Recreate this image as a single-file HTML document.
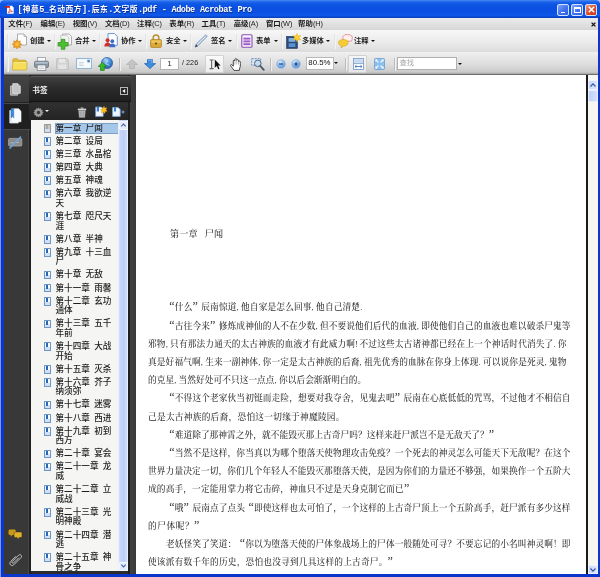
<!DOCTYPE html>
<html lang="zh"><head><meta charset="utf-8"><title>Adobe Acrobat Pro</title>
<style>
html,body{margin:0;padding:0;}
body>*{will-change:transform;}
body{width:600px;height:577px;overflow:hidden;position:relative;background:#fff;font-family:"Liberation Sans","Noto Sans CJK SC",sans-serif;color:#222;}
div,span,i{box-sizing:border-box;}
.a{position:absolute;}
/* window frame */
#frame{position:absolute;left:0;top:0;width:600px;height:577px;background:#0a36cc;border-left:1px solid #7f98ee;}
#title{position:absolute;left:0;top:0;width:600px;height:17.5px;background:linear-gradient(to bottom,#4a8cf2 0%,#2a70ec 7%,#1059e6 18%,#0a4fe0 45%,#0b52e4 70%,#0d58ea 85%,#0a48d0 94%,#0a3cba 100%);}
#title .t{position:absolute;left:17.6px;top:4px;height:12px;line-height:12px;font-size:7.75px;font-weight:bold;color:#fff;white-space:nowrap;width:234px;text-align-last:justify;font-family:"Liberation Mono","Noto Sans CJK SC",monospace;text-shadow:0.5px 0.5px 0 #0a2a8a;}
.wb{position:absolute;top:3.7px;width:12px;height:12px;border-radius:2px;border:1px solid #d4e2ff;background:linear-gradient(135deg,#7ea6fa,#3f72ec 55%,#2c5ee2);}
#menubar{position:absolute;left:3.5px;top:17.5px;width:594px;height:12.5px;border-bottom:1px solid #f4f4f4;background:linear-gradient(to bottom,#ececec,#d6d6d6);}
.mi{position:absolute;font-weight:700;top:0.3px;height:12.5px;line-height:12.5px;font-size:7.4px;width:23.8px;white-space:nowrap;color:#1a1a1a;text-align-last:justify;}
#tb1{position:absolute;left:3.5px;top:30px;width:594px;height:23px;background:linear-gradient(to bottom,#f7f7f7,#ebebeb 55%,#dcdcdc);border-bottom:1px solid #f1f1f1;}
#tb2{position:absolute;left:3.5px;top:53px;width:594px;height:22.3px;background:linear-gradient(to bottom,#eeeeee,#dedede 50%,#cbcbcb 86%,#b0b0b0 93%,#4e4e4e 100%);}
.tl{position:absolute;font-weight:700;top:36.4px;height:10px;line-height:10px;font-size:7.3px;text-align-last:justify;color:#1a1a1a;white-space:nowrap;}
.dd{position:absolute;width:0;height:0;border-left:2px solid transparent;border-right:2px solid transparent;border-top:2.4px solid #111;margin-left:-0.3px;}
.grip{position:absolute;width:1px;height:15px;top:34px;background:#e2e2e2;box-shadow:1px 0 0 #f4f4f4;}
.sep{position:absolute;width:1px;height:13px;top:57.5px;background:#bcbcbc;box-shadow:1px 0 0 #f0f0f0;}
.box{position:absolute;background:#fff;border:1px solid #8e8e8e;font-size:7.5px;line-height:10px;color:#222;}
/* left panel */
#panel{position:absolute;left:4px;top:75.3px;width:132px;height:498.7px;background:linear-gradient(to right,#2c2c2c 0,#2c2c2c 124px,#1c1e22 124px,#1c1e22 126.200px,#414141 126.200px,#3a3a3a 132px);}
#strip{position:absolute;left:0;top:0;width:24.5px;height:100%;background:#383838;border-right:1px solid #484848;box-shadow:2.5px 0 0 #212121;}
#phead{position:absolute;left:25px;top:1.2px;width:101.500px;height:26.3px;background:linear-gradient(to bottom,#404040,#2c2c2c 45%,#1f1f1f);border-top:1px solid #565656;border-bottom:1px solid #141414;border-radius:2px 2px 0 0;}
#phead .t{position:absolute;left:3.3px;top:9.2px;font-size:7.6px;line-height:10px;color:#f4f4f4;font-weight:700;}
#ptool{position:absolute;left:25px;top:28px;width:99px;height:17.200px;background:linear-gradient(to bottom,#303030,#242424);}
#list{position:absolute;left:27px;top:45.2px;width:97px;height:451px;background:#f5f5f3;overflow:hidden;}
#list .in{position:absolute;left:0;top:1.9px;width:88px;}
.bi{position:relative;font-weight:500;padding:1.75px 0 1.75px 24.5px;font-size:8.6px;line-height:9.6px;white-space:nowrap;color:#1e1e1e;word-spacing:1.9px;}
.bi span{display:inline-block;vertical-align:top;}
.bi.sel span{background:#a5c8ea;outline:1px solid #7d9fc4;width:62px;}
.bk{position:absolute;left:12.5px;top:2px;width:7.1px;height:8.7px;background:#fbfdff;border:1px solid #6a96c8;border-radius:0.5px;}
.bk:after{content:"";position:absolute;left:1.4px;top:0;width:2.2px;height:4px;background:#2a66b4;}.bk:before{content:"";position:absolute;left:0;bottom:0;width:100%;height:3px;background:#cfe0f4;}
.sel .bk{background:#c9c9c9;border-color:#9a9a9a;}
.sel .bk:after{background:#a8a8a8;}
#lsb{position:absolute;left:87px;top:0;width:10px;height:452px;background:linear-gradient(to right,#f2f6ff 0,#c6d5f9 22%,#bdcef7 60%,#ccd9fa 85%,#f2f6ff 100%);}
/* doc */
#doc{position:absolute;left:136px;top:75.3px;width:450px;height:498.7px;background:#fff;}
.ln{position:absolute;font-family:"Liberation Serif","Noto Serif CJK SC",serif;font-size:8.7px;line-height:12px;height:12px;color:#333;font-weight:500;white-space:nowrap;}
.ln.j{text-align-last:justify;}
.ln .q{display:inline-block;width:8.7px;font-size:12px;line-height:0;font-weight:normal;}.ln .qo{text-align:right;text-align-last:right;}.ln .qc{text-align:left;text-align-last:left;}
.ln .h{display:inline-block;width:0.5em;text-align:left;text-align-last:left;}
#vline{position:absolute;left:586px;top:75.3px;width:2px;height:498.7px;background:#1a1a1a;}
#vsb{position:absolute;left:588px;top:75.3px;width:9.5px;height:498.7px;background:#f6f6f2;}
.mi span{font-weight:normal;letter-spacing:-0.1px}
#title .t span{font-size:8.6px;letter-spacing:-0.5px}
</style></head><body>
<div id="frame"></div>
<div id="title">
  <svg class="a" style="left:5px;top:5px" width="9" height="9" viewBox="0 0 9 9"><path d="M2 .7h5l1.700 1.700v6.300h-6.700z" fill="#fff"/><path d="M0 1h5v1.800h-5z" fill="#cc1f1a"/><path d="M3.200 7.600c1-1.300 1.600-2.700 1.500-4 .5 1.700 1.500 2.600 2.900 2.900-1.600 0-3 .4-4.400 1.100z" fill="none" stroke="#d4261c" stroke-width="0.700"/></svg>
  <div class="t"><span>[</span>神墓<span>5_</span>名动西方<span>].</span>辰东<span>.</span>文字版<span>.pdf - Adobe Acrobat Pro</span></div>
  <div class="wb" style="left:557.3px"><i class="a" style="left:2.5px;top:7px;width:4.5px;height:1.8px;background:#fff"></i></div>
  <div class="wb" style="left:571.2px"><i class="a" style="left:2px;top:2px;width:6.5px;height:6px;border:1px solid #fff;border-top-width:2px"></i></div>
  <div class="wb" style="left:585px;background:linear-gradient(135deg,#f0a088,#d9502c 50%,#c23a18)">
    <svg class="a" style="left:1.5px;top:1.5px" width="7" height="7" viewBox="0 0 7 7"><path d="M0.8 0.8L6.2 6.2M6.2 0.8L0.8 6.2" stroke="#fff" stroke-width="1.5"/></svg></div>
</div>
<i class="a" style="left:0;top:0;width:3px;height:3px;background:radial-gradient(circle at 100% 100%,rgba(170,190,250,0) 2.200px,#aabefa 3px)"></i><i class="a" style="left:597px;top:0;width:3px;height:3px;background:radial-gradient(circle at 0 100%,rgba(170,190,250,0) 2.200px,#aabefa 3px)"></i>
<div id="menubar">
<div class="mi" style="left:4.3px">文件<span>(F)</span></div>
<div class="mi" style="left:36.5px">编辑<span>(E)</span></div>
<div class="mi" style="left:68.7px">视图<span>(V)</span></div>
<div class="mi" style="left:100.9px">文档<span>(D)</span></div>
<div class="mi" style="left:133.1px">注释<span>(C)</span></div>
<div class="mi" style="left:165.3px">表单<span>(R)</span></div>
<div class="mi" style="left:197.5px">工具<span>(T)</span></div>
<div class="mi" style="left:229.7px">高级<span>(A)</span></div>
<div class="mi" style="left:261.9px">窗口<span>(W)</span></div>
<div class="mi" style="left:294.1px">帮助<span>(H)</span></div>
<svg class="a" style="left:586.6px;top:3.6px" width="5" height="5" viewBox="0 0 5 5"><path d="M0.6 0.6L4.4 4.4M4.4 0.6L0.6 4.4" stroke="#111" stroke-width="1.3"/></svg>
</div>
<div id="tb1"></div>
<div id="tb2"></div>
<!-- toolbar 1 -->
<i class="grip" style="left:6.5px"></i>
<svg class="a" style="left:12px;top:33px" width="15" height="17" viewBox="0 0 15 17"><path d="M5.5 1h6.5l2.5 2.5v8.5h-9z" fill="#fdfdfd" stroke="#9a9a9a" stroke-width="0.8"/><path d="M12 1v2.5h2.5" fill="#ddd" stroke="#9a9a9a" stroke-width="0.6"/><path d="M5 6.6l1.2 1.9 2.2-.6-.5 2.2 1.9 1.2-1.9 1.2.5 2.2-2.2-.6L5 16l-1.2-1.9-2.2.6.5-2.2L.2 11.300l1.900-1.200-.5-2.200 2.200.6z" fill="#f0a020" stroke="#c87a10" stroke-width="0.5"/><circle cx="5" cy="11.300" r="1.800" fill="#f8c040"/></svg>
<div class="tl" style="left:29.800px;width:14.2px">创建</div><i class="dd" style="left:47.5px;top:40.300px"></i>
<i class="grip" style="left:54px"></i>
<svg class="a" style="left:56.500px;top:33px" width="15" height="17" viewBox="0 0 15 17"><path d="M5.5 1h6.5l2.5 2.500v8.500h-9z" fill="#fdfdfd" stroke="#9a9a9a" stroke-width="0.800"/><path d="M3.800 2.300h6l2 2v7.500h-8z" fill="#f4f4f4" stroke="#a8a8a8" stroke-width="0.600"/><path d="M4.300 6.300h3.600v3.200h3.200v3.600h-3.200v3.200h-3.600v-3.200h-3.200v-3.600h3.200z" fill="#4cc030" stroke="#2a8a18" stroke-width="0.700"/></svg>
<div class="tl" style="left:75px;width:14.2px">合并</div><i class="dd" style="left:92.600px;top:40.300px"></i>
<i class="grip" style="left:99px"></i>
<svg class="a" style="left:103.500px;top:33.300px" width="14" height="15" viewBox="0 0 14 15"><path d="M4 .6h6.500l2.800 2.800v9h-9.300z" fill="#fff" stroke="#5a8ad0" stroke-width="0.900"/><circle cx="3.600" cy="7.200" r="2" fill="#d03028"/><path d="M.4 13.500c0-3 1.400-4 3.200-4s3.200 1 3.200 4z" fill="#d03028"/><circle cx="8.300" cy="8.200" r="1.900" fill="#3a6ac8"/><path d="M5.300 14.200c0-2.800 1.300-3.800 3-3.800s3 1 3 3.800z" fill="#3a6ac8"/></svg>
<div class="tl" style="left:120.800px;width:14.2px">协作</div><i class="dd" style="left:138.100px;top:40.300px"></i>
<i class="grip" style="left:145px"></i>
<svg class="a" style="left:150px;top:34px" width="12" height="14" viewBox="0 0 12 14"><path d="M3.200 6v-2.200a2.800 2.800 0 0 1 5.600 0v2.200" fill="none" stroke="#b89030" stroke-width="1.500"/><rect x=".6" y="5.600" width="10.800" height="7.800" rx="1" fill="#dcaa38" stroke="#a87818" stroke-width="0.700"/><rect x="1.400" y="6.300" width="9.200" height="2.600" fill="#f0cc68" opacity=".8"/><circle cx="6" cy="9.500" r="1.100" fill="#6a4808"/></svg>
<div class="tl" style="left:165.800px;width:14.2px">安全</div><i class="dd" style="left:183.100px;top:40.300px"></i>
<i class="grip" style="left:190px"></i>
<svg class="a" style="left:194px;top:33.500px" width="14" height="14" viewBox="0 0 14 14"><path d="M1 13.200l1-3 9.300-9.200c.8-.5 2.200.8 1.700 1.700l-9.200 9.300z" fill="#a9c2dc" stroke="#7493b6" stroke-width="0.600"/><path d="M1 13.200l1-3 2 2z" fill="#3c4c62"/><path d="M3.200 10.800l8.400-8.400" stroke="#e6eef8" stroke-width="0.900"/></svg>
<div class="tl" style="left:211.300px;width:14.2px">签名</div><i class="dd" style="left:228.500px;top:40.300px"></i>
<i class="grip" style="left:236px"></i>
<svg class="a" style="left:240.500px;top:34px" width="12" height="14" viewBox="0 0 12 14"><rect x=".8" y=".8" width="10.200" height="12.400" rx="1" fill="#fbf8fd" stroke="#8a50b0" stroke-width="1.100"/><rect x="2.400" y="3.600" width="7" height="2" fill="#a060c8"/><rect x="2.400" y="6.400" width="7" height="2" fill="#a060c8"/><rect x="2.400" y="9.200" width="7" height="2" fill="#a060c8"/></svg>
<div class="tl" style="left:256px;width:14.2px">表单</div><i class="dd" style="left:273.800px;top:40.300px"></i>
<i class="grip" style="left:281px"></i>
<svg class="a" style="left:286px;top:32.500px" width="16" height="16" viewBox="0 0 16 16"><rect x=".6" y="3.500" width="10.800" height="11.800" fill="#2a4a78" stroke="#18305a" stroke-width="0.600"/><rect x="2.600" y="5" width="6.800" height="3.800" fill="#7fb0e4"/><rect x="2.600" y="10.200" width="6.800" height="3.800" fill="#5a90d0"/><path d="M11 .3l1.100 2.600 2.800-.5-1.600 2.300 1.600 2.300-2.800-.5-1.100 2.600-1.100-2.600-2.800.5 1.600-2.300-1.600-2.300 2.800.5z" fill="#f8d030" stroke="#e0a818" stroke-width="0.400"/></svg>
<div class="tl" style="left:302.300px;width:21px">多媒体</div><i class="dd" style="left:326.300px;top:40.300px"></i>
<i class="grip" style="left:333.500px"></i>
<svg class="a" style="left:338px;top:33.800px" width="15" height="14" viewBox="0 0 15 14"><path d="M6.500 1.200c.8-1 2.400-1 3.200-.2 1-.8 2.800-.5 3.300.8 1.300.2 1.800 1.800 1 2.800.6 1.200-.3 2.600-1.700 2.600h-5.300c-1.500 0-2.300-1.300-1.900-2.500-.9-1.300 0-3.200 1.400-3.500z" fill="#fdf0f0" stroke="#d86a6a" stroke-width="0.700"/><path d="M.5 8.800c0-2 1.600-3.300 4.800-3.300s4.800 1.300 4.800 3.300-1.800 3.200-4.300 3.200l-2.800 1.800.6-2.200c-1.900-.4-3.100-1.400-3.100-2.800z" fill="#f8cc30" stroke="#d8a010" stroke-width="0.600"/></svg>
<div class="tl" style="left:354px;width:14.2px">注释</div><i class="dd" style="left:371.300px;top:40.300px"></i>
<!-- toolbar 2 -->
<i class="grip" style="left:6.500px;top:57px"></i>
<svg class="a" style="left:12px;top:57.500px" width="16" height="13" viewBox="0 0 16 13"><path d="M.8 2c0-.8.500-1.300 1.300-1.300h3.200l1.400 1.500h6.300c.8 0 1.200.5 1.200 1.200v1.200h-13.400z" fill="#e8c038" stroke="#b8901c" stroke-width="0.600"/><path d="M1.300 12c-.6 0-.9-.4-.9-1l.4-6.200c0-.6.400-1 1-1h12.400c.7 0 1.100.4 1 1l-.5 6.200c0 .6-.4 1-1 1z" fill="#f8de58" stroke="#c09a20" stroke-width="0.600"/><path d="M1.500 4.600h12.800" stroke="#fdf0a0" stroke-width="0.800"/></svg>
<svg class="a" style="left:34px;top:57px" width="15" height="14" viewBox="0 0 15 14"><rect x="3.400" y=".6" width="8.200" height="4.500" fill="#fafafa" stroke="#8a929a" stroke-width="0.700"/><rect x=".5" y="4.200" width="14" height="6.300" rx="1.400" fill="#8a98a8" stroke="#5a6670" stroke-width="0.700"/><rect x="1.200" y="4.900" width="12.600" height="1.800" fill="#b4c0cc"/><rect x="3.200" y="8" width="8.600" height="5.300" fill="#fdfdfd" stroke="#6a747e" stroke-width="0.700"/><path d="M4.600 10h5.800M4.600 11.600h5.800" stroke="#b0b0b0" stroke-width="0.600"/></svg>
<svg class="a" style="left:56px;top:57.800px" width="13" height="12" viewBox="0 0 13 12"><path d="M.6 1.400c0-.5.300-.8.800-.8h9.200l1.800 1.800v8.200c0 .5-.3.800-.8.800h-10.200c-.5 0-.8-.3-.8-.8z" fill="#d4d4d4" stroke="#b4b4b4" stroke-width="0.700"/><rect x="3" y=".9" width="6.200" height="3.800" fill="#e8e8e8"/><rect x="2.400" y="6.600" width="8" height="4.500" fill="#e4e4e4"/></svg>
<svg class="a" style="left:76px;top:58px" width="16" height="11" viewBox="0 0 16 11"><rect x=".6" y=".6" width="14.800" height="9.800" fill="#f8fbfe" stroke="#86acd4" stroke-width="0.900"/><rect x="11.300" y="1.800" width="2.600" height="2.600" fill="#5a86b8"/><path d="M3 4.400h5M3 6h4M3 7.600h5" stroke="#b8c6d6" stroke-width="0.700"/></svg>
<svg class="a" style="left:97.500px;top:57px" width="15" height="14" viewBox="0 0 15 14"><defs><radialGradient id="gl" cx=".4" cy=".3" r=".8"><stop offset="0" stop-color="#9fd0f8"/><stop offset=".6" stop-color="#3a80d0"/><stop offset="1" stop-color="#1c58a8"/></radialGradient></defs><circle cx="9" cy="6" r="5.600" fill="url(#gl)" stroke="#1c4e98" stroke-width="0.600"/><path d="M6.500 2.200c1.500-.3 3 .6 3 1.800s-1.800 1.200-1.400 2.600 2.600.6 3.400 2" fill="none" stroke="#c8e4fa" stroke-width="0.900" opacity=".8"/><path d="M4.400 5.200l4.200 4.300h-2.300v3.900h-3.800v-3.900h-2.300z" fill="#38b828" stroke="#1c7c14" stroke-width="0.700"/></svg>
<i class="sep" style="left:119px"></i>
<svg class="a" style="left:126px;top:59px" width="12" height="10" viewBox="0 0 12 10"><path d="M6 .5l5.500 5h-3v4h-5v-4h-3z" fill="#c4c4c4" stroke="#aaa" stroke-width="0.600"/></svg>
<svg class="a" style="left:144px;top:59px" width="12" height="10" viewBox="0 0 12 10"><path d="M6 9.600l5.500-5h-3v-4h-5v4h-3z" fill="#3c8ce0" stroke="#1c5cb0" stroke-width="0.700"/><path d="M4 1.200h4v3.400" fill="none" stroke="#8cc4f8" stroke-width="0.700"/></svg>
<div class="box" style="left:160.300px;top:57.500px;width:19px;height:11.500px;text-align:center;border-color:#b4b4b4">1</div>
<div class="tl" style="left:181.500px;top:58.300px;font-size:7.300px;width:15.200px;text-align-last:justify;font-weight:normal;color:#1a1a1a">/ 226</div>
<div class="a" style="left:204.800px;top:54.800px;width:19px;height:17.500px;background:linear-gradient(#fafafa,#ececec);border:1px solid #d2d2d2;border-radius:1px"></div>
<svg class="a" style="left:208.500px;top:59px" width="12" height="11" viewBox="0 0 12 11"><path d="M.6 1h4M.6 9.600h4M2.600 1v8.600" stroke="#666" stroke-width="1.100" fill="none"/><path d="M5.800.6v8.200l2-1.700 1.400 3.200 1.300-.6-1.400-3.100h2.500z" fill="#111"/></svg>
<svg class="a" style="left:229.500px;top:57.500px" width="13" height="13" viewBox="0 0 13 13"><path d="M4 12.400c-.8-1.600-2.400-3-3.400-4.600-.5-.9.700-1.600 1.400-.9l1.300 1.300v-5.200c0-1 1.500-1 1.600 0v-1.600c.1-1.100 1.700-1.100 1.800 0v1c.1-1.100 1.700-1 1.800.1v1.100c.2-.9 1.700-.8 1.800.2 0 2.100.4 4.300-.5 6.100l-.5 2.500z" fill="#fff" stroke="#2a2a2a" stroke-width="0.850" stroke-linejoin="round"/><path d="M4.900 3v3.500M6.700 2.400v4M8.500 3.600v3" stroke="#777" stroke-width="0.500"/></svg>
<svg class="a" style="left:250.500px;top:57.500px" width="14" height="13" viewBox="0 0 14 13"><rect x=".7" y=".7" width="9" height="6.500" fill="#dbe8f6" stroke="#5a86b8" stroke-width="0.900" stroke-dasharray="2 1"/><circle cx="6.800" cy="5.400" r="3.300" fill="#c0d8f0" fill-opacity=".8" stroke="#5a6a7c" stroke-width="1"/><path d="M9.200 7.800l3.600 4" stroke="#4a5666" stroke-width="1.800" stroke-linecap="round"/></svg>
<i class="sep" style="left:269.500px"></i>
<svg class="a" style="left:275.500px;top:58.500px" width="10" height="10" viewBox="0 0 10 10"><defs><radialGradient id="zb" cx=".4" cy=".3" r=".8"><stop offset="0" stop-color="#d8eafc"/><stop offset=".6" stop-color="#78aae4"/><stop offset="1" stop-color="#5088cc"/></radialGradient></defs><circle cx="5" cy="5" r="4.500" fill="url(#zb)" stroke="#a8c4e6" stroke-width="0.700"/><path d="M3 5h4" stroke="#1c447e" stroke-width="1.200"/></svg>
<svg class="a" style="left:291px;top:58.500px" width="10" height="10" viewBox="0 0 10 10"><circle cx="5" cy="5" r="4.500" fill="url(#zb)" stroke="#a8c4e6" stroke-width="0.700"/><path d="M3 5h4M5 3v4" stroke="#1c447e" stroke-width="1.200"/></svg>
<div class="box" style="left:305.500px;top:57.200px;width:27.500px;height:12.500px;border-color:#b8b8b8;padding-left:1.300px;line-height:10.500px;font-size:7.800px;color:#111">80.5%</div>
<i class="dd" style="left:334.600px;top:62.300px"></i>
<i class="sep" style="left:344.500px"></i>
<div class="a" style="left:348.200px;top:54.800px;width:19.200px;height:17.500px;background:linear-gradient(#f6f6f6,#e6e6e6);border:1px solid #d0d0d0;border-radius:1px"></div>
<svg class="a" style="left:353px;top:58px" width="11" height="12" viewBox="0 0 11 12"><rect x=".5" y=".5" width="10" height="11" fill="#fafcff" stroke="#7f9fc8" stroke-width="0.900"/><rect x="1.200" y="1.200" width="8.600" height="3.400" fill="#c4d8f0"/><path d="M.6 5.400h9.800" stroke="#7f9fc8" stroke-width="0.900"/><path d="M2 8.500h7M2 8.500l1.500-1.300M2 8.500l1.500 1.300M9 8.500l-1.500-1.300M9 8.500l-1.500 1.300" stroke="#3a6aa8" stroke-width="0.800" fill="none"/></svg>
<svg class="a" style="left:374.200px;top:58px" width="11" height="12" viewBox="0 0 11 12"><rect x=".5" y=".5" width="10" height="11" rx="1" fill="#8cc0ec" stroke="#6a9ed0" stroke-width="0.800"/><path d="M1.800 1.800l2.600 2.600M9.200 1.800l-2.600 2.600M1.800 10.200l2.600-2.600M9.200 10.200l-2.600-2.600" stroke="#fff" stroke-width="1.200"/><path d="M1.500 1.500h2.200l-2.200 2.200zM9.500 1.500h-2.200l2.200 2.200zM1.500 10.500h2.200l-2.200-2.200zM9.500 10.500h-2.200l2.200-2.200z" fill="#fff"/></svg>
<i class="sep" style="left:393.500px"></i>
<div class="box" style="left:397px;top:57.200px;width:59.500px;height:12.500px;border-color:#b0b0b0;color:#a8a8a8;padding-left:1.500px;line-height:10.500px;font-size:7.300px">查找</div>
<i class="dd" style="left:458px;top:62.800px"></i>

<div id="panel">
  <div id="strip">
    <div class="a" style="left:0;top:1px;width:24.500px;height:26.500px;background:linear-gradient(#444,#383838);border-bottom:1px solid #222"></div>
    <div class="a" style="left:0;top:28px;width:25.500px;height:26.500px;background:#202020;border-top:1px solid #4a4a4a;border-bottom:1px solid #4a4a4a"></div>
    <svg class="a" style="left:5.500px;top:8px" width="11" height="13" viewBox="0 0 12 14"><path d="M.6 3.200h6.200l1.600 1.600v8.400h-7.800z" fill="#9c9c9c" stroke="#d8d8d8" stroke-width="0.800"/><path d="M3 .600h5.600l2.600 2.600v8h-8.200z" fill="#c4c4c4" stroke="#ececec" stroke-width="0.800"/><path d="M8.600 .600v2.600h2.600" fill="#8c8c8c" stroke="#ececec" stroke-width="0.600"/></svg>
    <svg class="a" style="left:4.800px;top:33px" width="13" height="16" viewBox="0 0 13 16"><path d="M.8 2.500h6.400l2 2v10.500h-8.400z" fill="#dce8f6" stroke="#f4f8fc" stroke-width="0.700"/><path d="M3.200.800h6.400l2.400 2.400v10.600h-8.800z" fill="#f6fafe" stroke="#fff" stroke-width="0.600"/><path d="M2 .500h2.800v9.500l-1.400-1.500-1.400 1.500z" fill="#3c8ad8" stroke="#2a68b0" stroke-width="0.400"/></svg>
    <svg class="a" style="left:3.500px;top:60.500px" width="15" height="13" viewBox="0 0 15 13"><rect x=".6" y="2.400" width="13.200" height="7.600" rx="1" fill="#8a8a8a" stroke="#b4b4b4" stroke-width="0.700"/><path d="M2.500 7.500c1.500-2.500 2.500 1 4 -1s2 1.500 4.500-.5" fill="none" stroke="#d0d0d0" stroke-width="0.700"/><path d="M1.500 12.400l11.500-11.800" stroke="#6aa4e0" stroke-width="1.500"/></svg>
    <svg class="a" style="left:4px;top:454px" width="15" height="11" viewBox="0 0 15 11"><path d="M.5 2.200c0-1 .6-1.700 1.700-1.700h4c1.100 0 1.700.7 1.700 1.700v2.200c0 1-.6 1.700-1.700 1.700h-1.700l-1.800 1.700v-1.700c-1.400 0-2.200-.7-2.200-1.700z" fill="#c89818"/><path d="M6 4.600c0-1 .6-1.700 1.700-1.700h4.600c1.100 0 1.700.7 1.700 1.700v2.300c0 1-.6 1.700-1.700 1.700h-1.400v1.900l-2-1.900h-1.200c-1.100 0-1.700-.7-1.700-1.700z" fill="#e0b028" stroke="#2e2e2e" stroke-width="0.500"/></svg>
    <svg class="a" style="left:4.500px;top:478px" width="14" height="14" viewBox="0 0 14 14"><path d="M9.800 4.800l-5.200 5.200c-.9.900-2.300-.4-1.400-1.400l6.400-6.400c1.600-1.600 4 .7 2.400 2.400l-7.200 7.200c-2.300 2.300-5.400-1-3.200-3.200l5.400-5.400" fill="none" stroke="#c4c4c4" stroke-width="1"/></svg>
  </div>
  <div id="phead"><div class="t">书签</div>
    <div class="a" style="left:91.300px;top:10.300px;width:7.800px;height:7.800px;border:1px solid #b8b8b8;background:#262626"><svg class="a" style="left:0.900px;top:0.900px" width="4" height="4" viewBox="0 0 4 4"><path d="M3.200 0v4l-3-2z" fill="#fafafa"/></svg></div>
  </div>
  <div id="ptool">
    <svg class="a" style="left:4px;top:3.500px" width="11" height="11" viewBox="0 0 11 11"><path d="M5.500 .4l.9 1.300 1.500-.5.300 1.600 1.600.3-.5 1.500 1.300.9-1.300.9.500 1.500-1.600.3-.3 1.600-1.500-.5-.9 1.300-.9-1.300-1.500.5-.3-1.600-1.600-.3.500-1.500-1.300-.9 1.300-.9-.5-1.500 1.600-.3.300-1.600 1.500.5z" fill="#9a9a9a"/><circle cx="5.500" cy="5.500" r="1.700" fill="#3a3a3a"/></svg>
    <i class="dd" style="left:15.800px;top:7.300px;border-top-color:#f0f0f0"></i>
    <svg class="a" style="left:48px;top:3.500px" width="10" height="11" viewBox="0 0 10 11"><path d="M1.600 3.400h6.800l-.6 7.200h-5.600z" fill="#b8b8b8" stroke="#8a8a8a" stroke-width="0.500"/><rect x=".8" y="1.600" width="8.400" height="1.600" fill="#d0d0d0"/><rect x="3.600" y=".500" width="2.800" height="1.200" fill="#c0c0c0"/><path d="M3.500 4.500v5M5 4.500v5M6.500 4.500v5" stroke="#8e8e8e" stroke-width="0.500"/></svg>
    <svg class="a" style="left:65.500px;top:3.200px" width="13" height="11" viewBox="0 0 13 11"><path d="M.6 1h5.800l1.800 1.800v7.600h-7.600z" fill="#f2f6fc" stroke="#6a9ad4" stroke-width="0.700"/><path d="M1.800 1h2.200v5l-1.100-1-1.100 1z" fill="#3a80d0"/><path d="M9 .2l.9 1.900 2.100-.4-1.100 1.900 1.400 1.600-2.100.3-.4 2.100-1.500-1.500-1.900.9.400-2.100-1.500-1.400 2-.5z" fill="#f8c020" stroke="#e09810" stroke-width="0.300"/></svg>
    <svg class="a" style="left:83px;top:3.500px" width="13" height="10" viewBox="0 0 13 10"><path d="M.6 .6h5.600l2 2v6.800h-7.600z" fill="#eef4fc" stroke="#78a8e0" stroke-width="0.800"/><path d="M2 .6h2v4.400l-1-1-1 1z" fill="#3a80d0"/><path d="M9.500 5h3M11 3.500v3" stroke="#78a8e0" stroke-width="1.100"/></svg>
  </div>
  <div id="list"><div class="in">
<div class="bi sel"><i class="bk"></i><span>第一章 尸闻</span></div>
<div class="bi"><i class="bk"></i><span>第二章 设局</span></div>
<div class="bi"><i class="bk"></i><span>第三章 水晶棺</span></div>
<div class="bi"><i class="bk"></i><span>第四章 大典</span></div>
<div class="bi"><i class="bk"></i><span>第五章 神魂</span></div>
<div class="bi"><i class="bk"></i><span>第六章 我欲逆<br>天</span></div>
<div class="bi"><i class="bk"></i><span>第七章 咫尺天<br>涯</span></div>
<div class="bi"><i class="bk"></i><span>第八章 半神</span></div>
<div class="bi"><i class="bk"></i><span>第九章 十三血<br>尸</span></div>
<div class="bi"><i class="bk"></i><span>第十章 无敌</span></div>
<div class="bi"><i class="bk"></i><span>第十一章 雨馨</span></div>
<div class="bi"><i class="bk"></i><span>第十二章 玄功<br>通体</span></div>
<div class="bi"><i class="bk"></i><span>第十三章 五千<br>年前</span></div>
<div class="bi"><i class="bk"></i><span>第十四章 大战<br>开始</span></div>
<div class="bi"><i class="bk"></i><span>第十五章 灭杀</span></div>
<div class="bi"><i class="bk"></i><span>第十六章 芥子<br>纳须弥</span></div>
<div class="bi"><i class="bk"></i><span>第十七章 迷雾</span></div>
<div class="bi"><i class="bk"></i><span>第十八章 西进</span></div>
<div class="bi"><i class="bk"></i><span>第十九章 初到<br>西方</span></div>
<div class="bi"><i class="bk"></i><span>第二十章 宴会</span></div>
<div class="bi"><i class="bk"></i><span>第二十一章 龙<br>威</span></div>
<div class="bi"><i class="bk"></i><span>第二十二章 立<br>威战</span></div>
<div class="bi"><i class="bk"></i><span>第二十三章 光<br>明神殿</span></div>
<div class="bi"><i class="bk"></i><span>第二十四章 潜<br>逃</span></div>
<div class="bi"><i class="bk"></i><span>第二十五章 神<br>骨之争</span></div>
  </div><div id="lsb"><div class="a" style="left:0.500px;top:0.500px;width:9px;height:9px;background:#e2eafc;border:1px solid #f4f8ff;border-radius:1px"><svg class="a" style="left:1px;top:1.500px" width="5" height="4" viewBox="0 0 5 4"><path d="M.4 3.300l2.100-2.300 2.100 2.300" fill="none" stroke="#3a5aa8" stroke-width="1.100"/></svg></div>
  <div class="a" style="left:0.500px;top:441.500px;width:9px;height:9px;background:#e2eafc;border:1px solid #f4f8ff;border-radius:1px"><svg class="a" style="left:1px;top:1.500px" width="5" height="4" viewBox="0 0 5 4"><path d="M.4 .700l2.100 2.300 2.100-2.300" fill="none" stroke="#3a5aa8" stroke-width="1.100"/></svg></div></div></div>
</div>
<div id="doc"></div>
<div class="ln" style="left:170px;top:228.0px;font-size:9.1px;width:53px;text-align-last:justify">第一章&nbsp;&nbsp;&nbsp;尸闻</div>
<div class="ln j" style="left:166px;top:301.4px;width:198.5px;"><span class="q qo">“</span>什么<span class="q qc">”</span>辰南惊道<span class="h">,</span>他自家是怎么回事<span class="h">,</span>他自己清楚<span class="h">.</span></div>
<div class="ln j" style="left:166px;top:319.6px;width:404.5px;"><span class="q qo">“</span>古往今来<span class="q qc">”</span>修炼成神仙的人不在少数<span class="h">,</span>但不要说他们后代的血液<span class="h">,</span>即使他们自己的血液也难以破杀尸鬼等</div>
<div class="ln j" style="left:148px;top:337.8px;width:418.5px;">邪物<span class="h">,</span>只有那法力通天的太古神族的血液才有此威力啊<span class="h">!</span>不过这些太古诸神都已经在上一个神话时代消失了<span class="h">.</span>你</div>
<div class="ln j" style="left:148px;top:356.0px;width:418.5px;">真是好福气啊<span class="h">,</span>生来一副神体<span class="h">,</span>你一定是太古神族的后裔<span class="h">,</span>祖先优秀的血脉在你身上体现<span class="h">.</span>可以说你是死灵<span class="h">,</span>鬼物</div>
<div class="ln j" style="left:148px;top:374.2px;width:218.2px;">的克星<span class="h">,</span>当然好处可不只这一点点<span class="h">,</span>你以后会渐渐明白的。</div>
<div class="ln j" style="left:166px;top:392.4px;width:404.5px;"><span class="q qo">“</span>不得这个老家伙当初铤而走险，想要对我夺舍，见鬼去吧<span class="q qc">”</span>辰南在心底低低的咒骂，不过他才不相信自</div>
<div class="ln j" style="left:148px;top:410.6px;width:196.5px;">己是太古神族的后裔，恐怕这一切缘于神魔陵园。</div>
<div class="ln j" style="left:166px;top:428.8px;width:331.5px;"><span class="q qo">“</span>难道除了那神霄之外，就不能毁灭那上古奇尸吗？这样来赶尸派岂不是无敌天了？<span class="q qc">”</span></div>
<div class="ln j" style="left:166px;top:447.0px;width:404.5px;"><span class="q qo">“</span>当然不是这样，你当真以为哪个堕落天使物理攻击免疫？一个死去的神灵怎么可能天下无敌呢？在这个</div>
<div class="ln j" style="left:148px;top:465.2px;width:422.5px;">世界力量决定一切，你们几个年轻人不能毁灭那堕落天使，是因为你们的力量还不够强，如果换作一个五阶大</div>
<div class="ln j" style="left:148px;top:483.4px;width:264.6px;">成的高手，一定能用掌力将它击碎，神血只不过是天身克制它而已<span class="q qc">”</span></div>
<div class="ln j" style="left:166px;top:501.6px;width:404.5px;"><span class="q qo">“</span>哦<span class="q qc">”</span>辰南点了点头<span class="q qo">“</span>即使这样也太可怕了，一个这样的上古奇尸顶上一个五阶高手，赶尸派有多少这样</div>
<div class="ln j" style="left:148px;top:519.8px;width:54.8px;">的尸体呢？<span class="q qc">”</span></div>
<div class="ln j" style="left:166px;top:538.0px;width:404.5px;">老妖怪笑了笑道：<span class="q qo">“</span>你以为堕落天使的尸体象战场上的尸体一般随处可寻？不要忘记的小名叫神灵啊！即</div>
<div class="ln j" style="left:148px;top:556.2px;width:248.3px;">使该派有数千年的历史，恐怕也没寻到几具这样的上古奇尸。<span class="q qc">”</span></div>
<div id="vline"></div>
<div id="vsb">
  <div class="a" style="left:0;top:4.700px;width:9.500px;height:10px;background:linear-gradient(to right,#c8d8fb,#dce6fd);border:1px solid #eef3ff;border-radius:1.500px"><svg class="a" style="left:1.200px;top:2px" width="6" height="4" viewBox="0 0 6 4"><path d="M.5 3.500l2.500-2.600 2.500 2.600" fill="none" stroke="#3a55a0" stroke-width="1.200"/></svg></div>
  <div class="a" style="left:0;top:14.700px;width:9.500px;height:12px;background:linear-gradient(to right,#bfd1fa,#d4e0fc);border:1px solid #e8efff;border-radius:1.500px"></div>
  <div class="a" style="left:0;top:490px;width:9.500px;height:8.500px;background:linear-gradient(to right,#c8d8fb,#dce6fd);border:1px solid #eef3ff;border-radius:1.500px"><svg class="a" style="left:1.200px;top:1.500px" width="6" height="4" viewBox="0 0 6 4"><path d="M.5 .500l2.500 2.600 2.500-2.600" fill="none" stroke="#3a55a0" stroke-width="1.200"/></svg></div>
</div>
</body></html>
